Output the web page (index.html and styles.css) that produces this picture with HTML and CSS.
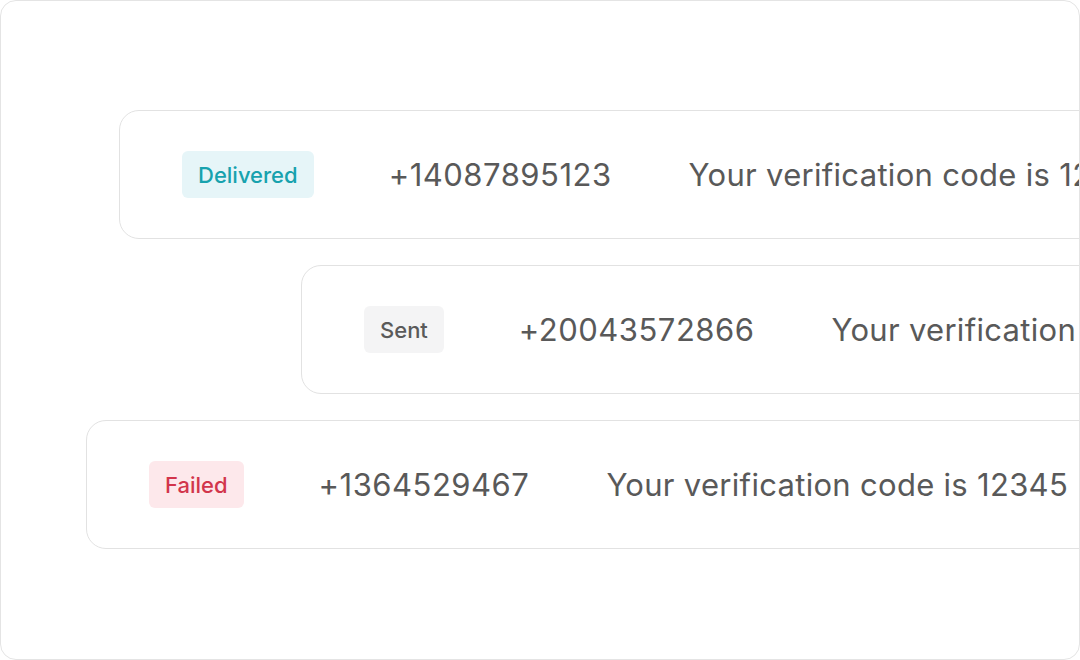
FILE: index.html
```html
<!DOCTYPE html>
<html>
<head>
<meta charset="utf-8">
<link rel="stylesheet" href="styles.css">
</head>
<body>
<div class="frame">
  <div class="row row-1">
    <span class="badge badge-delivered">Delivered</span>
    <span class="phone">+14087895123</span>
    <span class="msg">Your verification code is 12345</span>
  </div>
  <div class="row row-2">
    <span class="badge badge-sent">Sent</span>
    <span class="phone">+20043572866</span>
    <span class="msg">Your verification code is 12345</span>
  </div>
  <div class="row row-3">
    <span class="badge badge-failed">Failed</span>
    <span class="phone">+1364529467</span>
    <span class="msg">Your verification code is 12345</span>
  </div>
</div>
</body>
</html>
```
FILE: styles.css
```css
html, body {
  margin: 0;
  padding: 0;
  background: #ffffff;
}
body {
  font-family: Inter, "Noto Sans", sans-serif;
  width: 1080px;
  height: 660px;
  overflow: hidden;
}
.frame {
  box-sizing: border-box;
  width: 1080px;
  height: 660px;
  border: 1px solid #e4e4e4;
  border-radius: 16px;
  overflow: hidden;
  padding-top: 109px;
  display: flex;
  flex-direction: column;
  gap: 26px;
  background: #fff;
}
.row {
  box-sizing: border-box;
  flex-shrink: 0;
  height: 129px;
  width: 1400px;
  border: 1px solid #e2e2e2;
  border-radius: 20px;
  padding-left: 62px;
  display: flex;
  align-items: center;
  white-space: nowrap;
  background: #fff;
}
.row-1 { margin-left: 118px; }
.row-2 { margin-left: 300px; }
.row-3 { margin-left: 85px; }
.badge {
  box-sizing: border-box;
  height: 47px;
  padding: 0 16px;
  border-radius: 6px;
  display: inline-flex;
  align-items: center;
  font-size: 22px;
  font-weight: 500;
}
.badge-delivered { background: #e6f5f8; color: #17a2ae; }
.badge-sent { background: #f4f4f5; color: #5a5a5a; }
.badge-failed { background: #fde8eb; color: #d2354b; }
.phone {
  margin-left: 75px;
  font-size: 31px;
  letter-spacing: 0.5px;
  color: #595959;
}
.msg {
  margin-left: 77px;
  font-size: 31px;
  letter-spacing: 0.3px;
  color: #595959;
}
```
